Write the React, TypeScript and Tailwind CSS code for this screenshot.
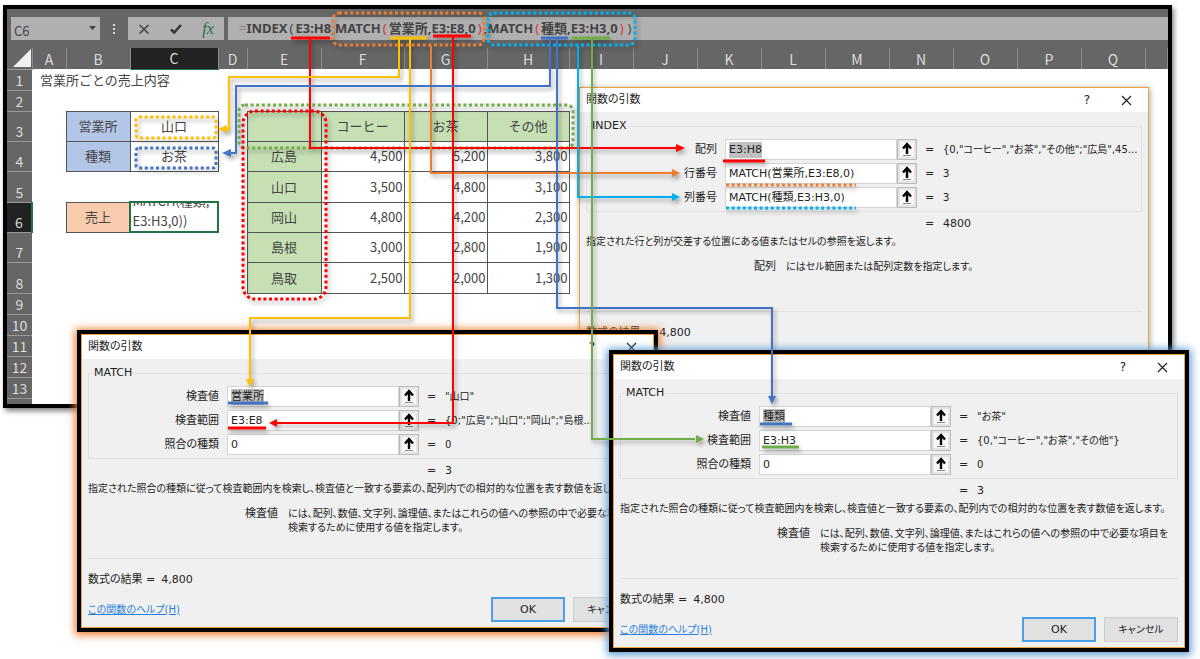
import type { ReactNode } from "react";

type Cell = { text?: ReactNode; className: string };

const columns = ["A", "B", "C", "D", "E", "F", "G", "H", "I", "J", "K", "L", "M", "N", "O", "P", "Q", ""];

const colWidths = [
  "w-[25px]", "w-[34px]", "w-16", "w-[88px]", "w-[29px]", "w-[74px]", "w-[83px]", "w-[83px]", "w-[82px]",
  "w-16", "w-16", "w-16", "w-16", "w-16", "w-16", "w-16", "w-16", "w-16", "",
];

const rowHeights = [
  "h-[21px]", "h-[21px]", "h-[30px]", "h-[30px]", "h-[31px]", "h-[30px]", "h-[30px]", "h-[31px]",
  "h-[21px]", "h-[21px]", "h-[21px]", "h-[21px]", "h-[21px]", "h-[21px]",
];

const blue = "border border-[#555] bg-[#b4c6e7] text-center";
const white = "border border-[#555] text-center";
const green = "border border-[#555] bg-[#c6e0b4] text-center";
const num = "border border-[#555] text-right pr-px";

const cells: Record<string, Cell> = {
  A1: { text: "営業所ごとの売上内容", className: "pl-2" },
  B3: { text: "営業所", className: blue },
  C3: { text: "山口", className: white },
  B4: { text: "種類", className: blue },
  C4: { text: "お茶", className: white },
  B6: { text: "売上", className: "border border-[#555] bg-[#f8cbad] text-center" },
  C6: {
    text: (
      <div className="flex h-7 flex-col justify-end overflow-hidden pl-0.5 leading-5">
        <span>MATCH(種類,</span>
        <span>E3:H3,0))</span>
      </div>
    ),
    className: "outline-2 -outline-offset-1 outline-[#217346]",
  },
  E3: { className: green },
  F3: { text: "コーヒー", className: green },
  G3: { text: "お茶", className: green },
  H3: { text: "その他", className: green },
};

const sales = [
  ["広島", "4,500", "5,200", "3,800"],
  ["山口", "3,500", "4,800", "3,100"],
  ["岡山", "4,800", "4,200", "2,300"],
  ["島根", "3,000", "2,800", "1,900"],
  ["鳥取", "2,500", "2,000", "1,300"],
];

sales.forEach((row, i) => {
  row.forEach((text, j) => {
    cells["EFGH"[j] + (i + 4)] = { text, className: j === 0 ? green : num };
  });
});

const paren = "px-0.5 font-normal";
const innerParen = "px-0.5 font-normal text-[#d33]";

function FormulaBar() {
  return (
    <div className="flex h-[31px] items-end text-[#444]">
      <div className="relative ml-1 h-[23px] w-[89px] bg-[#b0b0b0]">
        <select aria-label="名前ボックス" className="h-full w-full appearance-none pl-[3px] text-[13px] leading-5">
          <option>C6</option>
        </select>
        <svg className="pointer-events-none absolute top-2 right-1" width="7" height="7" viewBox="0 0 7 7">
          <path d="M0 1h7L3.500 5z" fill="#444" />
        </svg>
      </div>
      <svg className="mx-[11px]" width="6" height="23" viewBox="0 0 6 23" fill="#ddd">
        <path d="M2 7h2v2H2zM2 11h2v2H2zM2 15h2v2H2z" />
      </svg>
      <div className="flex h-[23px] w-24 items-center justify-around bg-[#b0b0b0]">
        <button aria-label="キャンセル">
          <svg width="12" height="12" viewBox="0 0 12 12" fill="none" stroke="#444" strokeWidth="1.600">
            <path d="M1.500 2l9 8.500M10.500 2l-9 8.500" />
          </svg>
        </button>
        <button aria-label="入力">
          <svg width="12" height="12" viewBox="0 0 12 12" fill="none" stroke="#333" strokeWidth="2.400">
            <path d="M1 6.500l3.200 3L11 2" />
          </svg>
        </button>
        <button className="font-['Liberation_Serif',serif] text-base leading-none text-[#217346] italic">fx</button>
      </div>
      <div
        role="textbox"
        aria-label="数式バー"
        className="ml-1 h-[23px] flex-1 overflow-hidden bg-[#b0b0b0] pl-[11px] font-['Noto_Sans','Noto_Sans_CJK_JP',sans-serif] text-[13px] leading-[22px] font-bold whitespace-nowrap"
      >
        <span className="font-normal text-[#888]">=</span>INDEX<span className={paren}>(</span>E3:H8,MATCH
        <span className={innerParen}>(</span>営業所,E3:E8,0<span className={innerParen}>)</span>
        ,MATCH<span className={innerParen}>(</span>種類,E3:H3,0
        <span className={innerParen}>)</span>
        <span className={paren}>)</span>
      </div>
    </div>
  );
}

function Sheet() {
  return (
    <table className="w-full table-fixed border-collapse bg-white text-[13px] leading-4 text-[#444]">
      <colgroup>
        {colWidths.map((w, i) => (
          <col key={i} className={w} />
        ))}
      </colgroup>
      <thead>
        <tr className="h-[21px] bg-[#666] text-[14px] text-[#ddd]">
          <th className="p-0">
            <svg className="ml-1.5" width="18" height="18" viewBox="0 0 18 18">
              <path d="M18 0v18H0z" fill="#f0f0f0" />
            </svg>
          </th>
          {columns.map((c) => (
            <th
              key={c}
              className={
                c === "C"
                  ? "border-b border-b-[#217346] bg-[#222] p-0 font-normal"
                  : "border-x border-x-[#8c8c8c] p-0 font-normal"
              }
            >
              {c}
            </th>
          ))}
        </tr>
      </thead>
      <tbody>
        {rowHeights.map((h, i) => (
          <tr key={i} className={h}>
            <th
              className={
                i === 5
                  ? "border-r-2 border-r-[#217346] bg-[#222] p-0 pb-0.5 align-bottom text-[14px] font-normal text-[#ddd]"
                  : "border-y border-y-[#999] bg-[#666] p-0 pb-0.5 align-bottom text-[14px] font-normal text-[#ddd]"
              }
            >
              {i + 1}
            </th>
            {columns.map((c) => {
              const cell = cells[c + (i + 1)];
              return (
                <td key={c} className={cell ? `p-0 whitespace-nowrap ${cell.className}` : "p-0"}>
                  {cell?.text}
                </td>
              );
            })}
          </tr>
        ))}
      </tbody>
    </table>
  );
}

type Arg = { label: string; value: string; result: string; selected?: boolean };

type DialogProps = {
  id: string;
  fn: string;
  args: Arg[];
  total: string;
  description: string;
  argName: string;
  argHelp: ReactNode;
};

function FunctionDialog({ id, fn, args, total, description, argName, argHelp }: DialogProps) {
  return (
    <section
      aria-label={fn}
      className="overflow-hidden border border-[#e8a33d] bg-[#f0f0f0] font-['DejaVu_Sans','Noto_Sans_CJK_JP',sans-serif] text-[11px] leading-4 whitespace-nowrap text-[#222] [font-feature-settings:'palt']"
    >
      <header className="flex h-6 items-center bg-white px-1.5">
        <h2 className="flex-1">関数の引数</h2>
        <button className="mr-[26px] w-4 text-[12px]">?</button>
        <button aria-label="閉じる" className="mr-2.5">
          <svg width="11" height="11" viewBox="0 0 11 11" stroke="#222" strokeWidth="1.200">
            <path d="M1 1l9 9M10 1l-9 9" />
          </svg>
        </button>
      </header>
      <div className="px-1.5 pt-2 pb-[5px]">
        <fieldset className="flex flex-col gap-[3px] border border-[#e2e2e2] pt-[7px] pb-[3px]">
          <legend className="ml-1 px-px leading-3">{fn}</legend>
          {args.map((arg, i) => (
            <div key={arg.label} className="flex h-[21px] items-center">
              <label htmlFor={`${id}-${i}`} className="mr-2 w-[130px] shrink-0 text-right">
                {arg.label}
              </label>
              <div className="flex h-full w-[172px] shrink-0 items-center border border-[#d4d4d4] bg-white px-[3px]">
                <input
                  id={`${id}-${i}`}
                  defaultValue={arg.value}
                  className={
                    arg.selected ? "field-sizing-content h-4 bg-[#c0c0c0]" : "field-sizing-content h-4"
                  }
                />
              </div>
              <button aria-label="範囲を選択" className="border border-[#bbb] bg-[#e4e4e4] p-0.5">
                <svg width="14" height="15" viewBox="0 0 14 15">
                  <path d="M0 0h14v15H0z" fill="#f8f8f8" />
                  <path d="M7 12V3M3 6.500L7 2l4 4.500" fill="none" stroke="#000" strokeWidth="2.400" />
                  <path d="M3 13.500h8" stroke="#888" />
                </svg>
              </button>
              <span className="ml-2 w-[18px] shrink-0">=</span>
              <span className="text-[10px]">{arg.result}</span>
            </div>
          ))}
        </fieldset>
        <p className="mt-1 flex pl-[339px]">
          <span className="w-[18px]">=</span>
          {total}
        </p>
        <p className="mt-0.5 text-[10px]">{description}</p>
        <div className="mt-2.5 flex h-[52px] border-b border-[#e2e2e2] leading-[14px]">
          <span className="w-[190px] shrink-0 text-right">{argName}</span>
          <p className="ml-2.5 text-[10px]">{argHelp}</p>
        </div>
        <p className="mt-[13px] flex gap-1.5">
          <span>数式の結果 =</span>4,800
        </p>
        <div className="mt-[9px] flex items-center gap-2">
          <a href="#help" className="mr-auto text-[10px] text-[#2a7fdc] underline">
            この関数のヘルプ(H)
          </a>
          <button className="h-[25px] w-[74px] border-2 border-[#4a9fe8] bg-[#e1e1e1]">OK</button>
          <button className="h-[25px] w-[74px] border border-[#ccc] bg-[#e1e1e1] text-[10px]">キャンセル</button>
        </div>
      </div>
    </section>
  );
}

const matchDescription =
  "指定された照合の種類に従って検査範囲内を検索し、検査値と一致する要素の、配列内での相対的な位置を表す数値を返します。";

const matchHelp = (
  <>
    には、配列、数値、文字列、論理値、またはこれらの値への参照の中で必要な項目を
    <br />
    検索するために使用する値を指定します。
  </>
);

const RED = "#ff0000";
const YELLOW = "#ffc000";
const ORANGE = "#ed7d31";
const CYAN = "#00b0f0";
const BLUE = "#4472c4";
const GREEN = "#70ad47";

const arrows = [
  { color: RED, d: "M310 38V148H676", head: "M685 148l-9 -4v8z" },
  { color: YELLOW, d: "M399 38V77H229V129H226", head: "M218 129l9 -4v8z" },
  { color: YELLOW, d: "M410 38V318H250V379", head: "M250 387l-4 -8h8z" },
  { color: ORANGE, d: "M431 46V173H672", head: "M680 173l-8 -4v8z" },
  { color: RED, d: "M453 37V423H277", head: "M269 423l8 -4v8z" },
  { color: CYAN, d: "M578 46V197H672", head: "M680 197l-8 -4v8z" },
  { color: BLUE, d: "M550 38V86H236V153H230", head: "M222 153l9 -4v8z" },
  { color: BLUE, d: "M557 38V308H772V396", head: "M772 404l-4 -8h8z" },
  { color: GREEN, d: "M592 38V439H695", head: "M704 439l-8 -4v8z" },
];

const underlines = [
  { color: RED, d: "M291 38H330" },
  { color: YELLOW, d: "M390 38H427" },
  { color: RED, d: "M433 36H471" },
  { color: BLUE, d: "M541 38H568" },
  { color: GREEN, d: "M572 38H610" },
  { color: RED, d: "M723 161H765" },
  { color: BLUE, d: "M228 403H268" },
  { color: RED, d: "M228 428H266" },
  { color: BLUE, d: "M760 424H792" },
  { color: GREEN, d: "M762 447H799" },
];

const boxes = [
  { color: ORANGE, x: 333, y: 13, w: 151, h: 32, r: 6 },
  { color: CYAN, x: 488, y: 13, w: 147, h: 32, r: 6 },
  { color: GREEN, x: 239, y: 105, w: 334, h: 43, r: 6 },
  { color: RED, x: 243, y: 111, w: 83, h: 188, r: 12 },
  { color: YELLOW, x: 136, y: 117, w: 80, h: 21, r: 3 },
  { color: BLUE, x: 136, y: 148, w: 80, h: 20, r: 3 },
];

function Annotations() {
  return (
    <svg
      className="pointer-events-none absolute top-0 left-0 drop-shadow-[2px_3px_2px_rgba(0,0,0,0.35)]"
      width="1200"
      height="659"
      viewBox="0 0 1200 659"
      fill="none"
      aria-hidden="true"
    >
      {boxes.map((b) => (
        <rect
          key={b.color + b.y}
          x={b.x}
          y={b.y}
          width={b.w}
          height={b.h}
          rx={b.r}
          stroke={b.color}
          strokeWidth="3"
          strokeDasharray="3 2.600"
        />
      ))}
      <path d="M726 185H856" stroke={ORANGE} strokeWidth="3" strokeDasharray="3 2.600" />
      <path d="M726 208H856" stroke={CYAN} strokeWidth="3" strokeDasharray="3 2.600" />
      {underlines.map((u) => (
        <path key={u.d} d={u.d} stroke={u.color} strokeWidth="3" />
      ))}
      {arrows.map((a) => (
        <g key={a.d}>
          <path d={a.d} stroke={a.color} strokeWidth="2" />
          <path d={a.head} fill={a.color} />
        </g>
      ))}
    </svg>
  );
}

export default function App() {
  return (
    <main className="relative min-h-screen overflow-hidden bg-white pt-[5px] pr-7 pl-[3px] font-['Noto_Sans_CJK_JP',sans-serif]">
      <div className="border-4 border-black bg-[#666] shadow-[2px_3px_5px_rgba(0,0,0,0.5)]">
        <FormulaBar />
        <div className="mt-2 h-[356px] overflow-hidden">
          <Sheet />
        </div>
      </div>

      <div className="absolute top-[87px] left-[579px] w-[570px] shadow-[1px_1px_6px_rgba(0,0,0,0.35)]">
        <FunctionDialog
          id="index"
          fn="INDEX"
          args={[
            { label: "配列", value: "E3:H8", result: '{0,"コーヒー","お茶","その他";"広島",45...', selected: true },
            { label: "行番号", value: "MATCH(営業所,E3:E8,0)", result: "3" },
            { label: "列番号", value: "MATCH(種類,E3:H3,0)", result: "3" },
          ]}
          total="4800"
          description="指定された行と列が交差する位置にある値またはセルの参照を返します。"
          argName="配列"
          argHelp="にはセル範囲または配列定数を指定します。"
        />
      </div>

      <div className="absolute top-[330px] left-[77px] w-[581px] border-4 border-black shadow-[0_1px_8px_2px_#ed7d31]">
        <FunctionDialog
          id="match-row"
          fn="MATCH"
          args={[
            { label: "検査値", value: "営業所", result: '"山口"', selected: true },
            { label: "検査範囲", value: "E3:E8", result: '{0;"広島";"山口";"岡山";"島根...' },
            { label: "照合の種類", value: "0", result: "0" },
          ]}
          total="3"
          description={matchDescription}
          argName="検査値"
          argHelp={matchHelp}
        />
      </div>

      <div className="absolute top-[350px] left-[609px] w-[580px] border-4 border-black shadow-[0_1px_8px_2px_#5b9bd5]">
        <FunctionDialog
          id="match-col"
          fn="MATCH"
          args={[
            { label: "検査値", value: "種類", result: '"お茶"', selected: true },
            { label: "検査範囲", value: "E3:H3", result: '{0,"コーヒー","お茶","その他"}' },
            { label: "照合の種類", value: "0", result: "0" },
          ]}
          total="3"
          description={matchDescription}
          argName="検査値"
          argHelp={matchHelp}
        />
      </div>

      <Annotations />
    </main>
  );
}
